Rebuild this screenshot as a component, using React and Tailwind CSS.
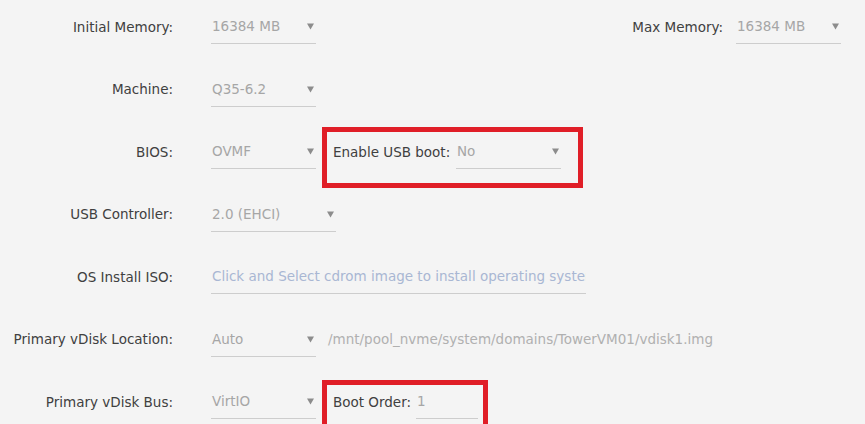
import React from 'react';

// small filled caret used by every dropdown
const Caret = () => (
  <svg width="7" height="7" viewBox="0 0 7 7" className="shrink-0">
    <path d="M0 0.5h7L3.5 6.5z" fill="#8c8c8c" />
  </svg>
);

function Select({ value, width }) {
  return (
    <div className={`flex h-[34px] items-center justify-between border-b border-[#cdcdcd] pl-[1px] pr-[2px] text-[#a6a6a6] ${width}`}>
      <span>{value}</span>
      <Caret />
    </div>
  );
}

function Label({ children }) {
  return (
    <div className="mr-[38px] w-[173px] shrink-0 whitespace-nowrap text-right text-[#404040]">{children}</div>
  );
}

function Row({ label, children }) {
  return (
    <div className="flex h-[34px] items-center">
      <Label>{label}</Label>
      {children}
    </div>
  );
}

export default function App() {
  return (
    <div
      className="h-[424px] overflow-hidden bg-[#f4f4f4] pt-[10px] text-[13.5px]"
      style={{ fontFamily: '"DejaVu Sans", "Liberation Sans", sans-serif' }}
    >
      <div className="flex flex-col gap-[28.5px]">
        {/* memory */}
        <Row label="Initial Memory:">
          <Select value="16384 MB" width="w-[105px]" />
          <div className="ml-auto flex items-center pr-[24px]">
            <span className="mr-[13px] text-[#404040]">Max Memory:</span>
            <Select value="16384 MB" width="w-[105px]" />
          </div>
        </Row>

        <Row label="Machine:">
          <Select value="Q35-6.2" width="w-[105px]" />
        </Row>

        {/* bios + usb boot */}
        <Row label="BIOS:">
          <Select value="OVMF" width="w-[105px]" />
          <div className="-mb-[19px] -mt-[8px] ml-[6px] flex items-start border-[5px] border-[#e01e27] pb-[14px] pl-[6px] pr-[17px] pt-[3px]">
            <div className="flex h-[34px] items-center">
              <span className="w-[123px] whitespace-nowrap text-[#404040]">Enable USB boot:</span>
              <Select value="No" width="w-[105px]" />
            </div>
          </div>
        </Row>

        <Row label="USB Controller:">
          <Select value="2.0 (EHCI)" width="w-[125px]" />
        </Row>

        <Row label="OS Install ISO:">
          <div className="flex h-[34px] w-[375px] items-center overflow-hidden whitespace-nowrap border-b border-[#cdcdcd] pl-[1px] text-[#a9b7d3]">
            Click and Select cdrom image to install operating system
          </div>
        </Row>

        <Row label="Primary vDisk Location:">
          <Select value="Auto" width="w-[105px]" />
          <span className="ml-[12px] whitespace-nowrap text-[#b0b0b0]">/mnt/pool_nvme/system/domains/TowerVM01/vdisk1.img</span>
        </Row>

        {/* bus + boot order */}
        <Row label="Primary vDisk Bus:">
          <Select value="VirtIO" width="w-[105px]" />
          <div className="-mb-[19px] -mt-[5px] ml-[6px] flex items-start border-[5px] border-[#e01e27] pb-[14px] pl-[6px] pr-[5px]">
            <div className="flex h-[34px] items-center">
              <span className="w-[83px] whitespace-nowrap text-[#404040]">Boot Order:</span>
              <div className="flex h-[34px] w-[62px] items-center border-b border-[#cdcdcd] pl-[1px] text-[#a6a6a6]">1</div>
            </div>
          </div>
        </Row>
      </div>
    </div>
  );
}
